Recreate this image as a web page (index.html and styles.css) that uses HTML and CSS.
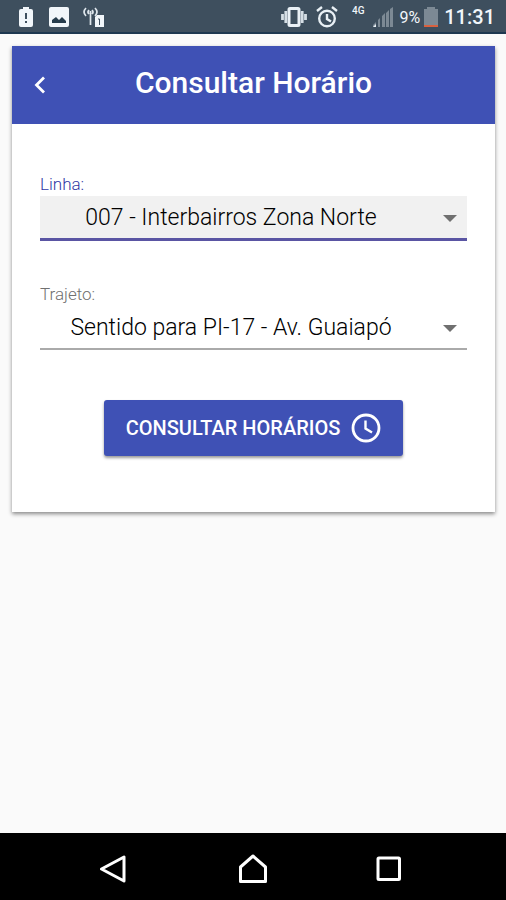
FILE: index.html
```html
<!DOCTYPE html>
<html lang="pt-BR">
<head>
<meta charset="utf-8">
<meta name="viewport" content="width=device-width, initial-scale=1">
<title>Consultar Horário</title>
<link rel="stylesheet" href="styles.css">
</head>
<body>

<div class="statusbar">
	<div class="notifications">
		<svg width="14" height="20" viewBox="0 0 14 20"><path fill="#f1f6fa" d="M4 0h6v2h2q2 0 2 2v14q0 2-2 2H2q-2 0-2-2V4q0-2 2-2h2z"/><path fill="#3e4f5e" d="M6 6h2v6H6zM6 14h2v2H6z"/></svg>
		<svg width="20" height="20" viewBox="0 0 20 20"><rect width="20" height="20" rx="2" fill="#f1f6fa"/><path fill="#263c4c" d="M3 16v-3l4-3 3 3 3-3 4 4v2z"/></svg>
		<svg width="22" height="20" viewBox="0 0 22 20"><g fill="none" stroke="#dfe7ed" stroke-width="1.700"><path d="M3 1q-4 4 0 8M6 3q-2 2 0 4M12 1q4 4 0 8M9 3q2 2 0 4M7.500 4v14"/></g><path fill="#f1f6fa" d="M14 8h7v12h-9V10z"/><path fill="none" stroke="#3e4f5e" d="M15 12h1.500v6"/></svg>
	</div>
	<div class="system">
		<svg class="vibrate" width="26" height="20" viewBox="0 0 26 20"><rect x="8" y="1.500" width="10" height="17" rx="1" fill="none" stroke="#e9f0f5" stroke-width="3"/><path stroke="#d5dee5" stroke-width="2.800" d="M4.800 4v12M1.500 7v6M21.200 4v12M24.500 7v6"/></svg>
		<svg class="alarm" width="22" height="22" viewBox="0 0 22 22"><g fill="none" stroke="#e9f0f5" stroke-width="2.400"><circle cx="11" cy="12.500" r="7.800"/><path d="M1 5l5-4M21 5l-5-4M11 8v5l4 2.500"/></g></svg>
		<span class="network">4G</span>
		<svg class="signal" width="20" height="20" viewBox="0 0 20 20"><path fill="#7c8994" d="M0 20v-2l3-3v5zM5 20v-7l2-2v9zM9 20V9l3-3v14zM13 20V6l3-3v17zM17 20V2l3-2v20z"/><path fill="#e9f0f5" d="M0 20l3-3v3z"/></svg>
		<span class="percent">9%</span>
		<svg class="battery" width="14" height="20" viewBox="0 0 14 20"><path fill="#7c8994" d="M3 0h8v2h3v18H0V2h3z"/><path fill="#d9613f" d="M0 18h14v2H0z"/></svg>
		<span class="clock">11:31</span>
	</div>
</div>

<main class="page">
	<section class="card">
		<header class="card-header">
			<button class="back" type="button" aria-label="Voltar">
				<svg width="12" height="18" viewBox="0 0 12 18"><path fill="none" stroke="#fff" stroke-width="2.800" d="M10 1.500L2.500 9l7.500 7.500"/></svg>
			</button>
			<h1>Consultar Horário</h1>
		</header>

		<form class="card-body">
			<div class="field active">
				<label for="linha">Linha:</label>
				<div class="select">
					<select id="linha" name="linha">
						<option>007 - Interbairros Zona Norte</option>
					</select>
				</div>
			</div>

			<div class="field">
				<label for="trajeto">Trajeto:</label>
				<div class="select">
					<select id="trajeto" name="trajeto">
						<option>Sentido para PI-17 - Av. Guaiapó</option>
					</select>
				</div>
			</div>

			<button class="submit" type="button">
				CONSULTAR HORÁRIOS
				<svg width="30" height="30" viewBox="0 0 30 30"><g fill="none" stroke="#fff"><circle cx="15" cy="15" r="13" stroke-width="2.800"/><path stroke-width="2.400" d="M14.500 7.500v8l6.500 4"/></g></svg>
			</button>
		</form>
	</section>
</main>

<nav class="navbar">
	<button type="button" aria-label="Voltar"><svg width="30" height="30" viewBox="0 0 30 30"><path d="M24 3v24L1.500 15z"/></svg></button>
	<button type="button" aria-label="Início"><svg width="30" height="30" viewBox="0 0 30 30"><path d="M2.500 27.500V13L15 2l12.500 11v14.500z"/></svg></button>
	<button type="button" aria-label="Recentes"><svg width="30" height="30" viewBox="0 0 30 30"><rect x="2" y="4" width="21.500" height="21.500" rx="1"/></svg></button>
</nav>

</body>
</html>
```
FILE: styles.css
```css
* {
	box-sizing: border-box;
}

body {
	margin: 0;
	min-height: 100vh;
	display: flex;
	flex-direction: column;
	background: #fafafa;
	font-family: Roboto, "Liberation Sans", sans-serif;
}

svg {
	display: block;
}

button {
	border: 0;
	padding: 0;
	font-family: inherit;
	cursor: pointer;
}

/* status bar */
.statusbar {
	height: 34px;
	padding: 2px 11px 0 19px;
	display: flex;
	justify-content: space-between;
	align-items: center;
	background: #3e4f5e;
	border-bottom: 2px solid #1e3850;
	color: #f1f6fa;
}

.notifications,
.system {
	display: flex;
	align-items: center;
}

.notifications {
	gap: 16px;
}

.notifications svg:last-child {
	margin-left: -2px;
}

.alarm {
	margin: 0 14px 0 9px;
}

.network {
	align-self: flex-start;
	font-size: 10px;
	line-height: 12px;
	font-weight: 500;
}

.signal {
	margin: 0 7px 0 8px;
}

.percent {
	font-size: 16px;
}

.battery {
	margin: 0 6px 0 4px;
}

.clock {
	font-size: 20px;
	font-weight: 500;
}

/* card */
.page {
	flex: 1;
	padding: 12px 11px 12px 12px;
}

.card {
	background: #fff;
	box-shadow: 0 2px 4px rgba(0, 0, 0, .45);
}

.card-header {
	height: 78px;
	padding: 0 20px;
	display: grid;
	grid-template-columns: 16px 1fr 16px;
	align-items: center;
	background: #3f51b5;
	color: #fff;
}

.card-header h1 {
	margin: 0;
	padding-bottom: 4px;
	font-size: 30px;
	line-height: 36px;
	font-weight: 500;
	text-align: center;
}

.back {
	height: 36px;
	display: flex;
	align-items: center;
	justify-content: center;
	background: none;
}

.card-body {
	padding: 48px 28px 56px;
}

/* fields */
.field {
	height: 70px;
	margin-bottom: 40px;
}

.field label {
	display: block;
	font-size: 17px;
	line-height: 24px;
	font-weight: 300;
	color: #707070;
}

.field.active label {
	color: #3038a5;
}

.select {
	position: relative;
}

.select::after {
	content: "";
	position: absolute;
	right: 10px;
	top: 19px;
	border: 7px solid transparent;
	border-top-color: #707070;
	border-bottom: 0;
	pointer-events: none;
}

.select select {
	appearance: none;
	display: block;
	width: 100%;
	height: 44px;
	padding: 0 45px 0 0;
	border: 0;
	border-bottom: 2px solid #aaa;
	border-radius: 0;
	background: none;
	font-family: inherit;
	font-size: 23px;
	font-weight: 300;
	color: #000;
	text-align: center;
	text-align-last: center;
	outline: 0;
}

.active select {
	height: 45px;
	background: #f1f1f1;
	border-bottom: 3px solid #5a55a3;
}

.submit {
	height: 56px;
	margin: 48px auto 0;
	padding: 0 22px;
	display: flex;
	align-items: center;
	gap: 11px;
	border-radius: 3px;
	background: #3f51b5;
	box-shadow: 0 2px 3px rgba(0, 0, 0, .4);
	color: #fff;
	font-size: 20px;
	font-weight: 500;
}

/* navigation */
.navbar {
	height: 67px;
	padding: 5px 46px 0;
	display: grid;
	grid-template-columns: repeat(3, 1fr);
	align-items: center;
	justify-items: center;
	background: #000;
}

.navbar button {
	background: none;
}

.navbar svg {
	fill: none;
	stroke: #fff;
	stroke-width: 3;
	stroke-linejoin: round;
}
```
